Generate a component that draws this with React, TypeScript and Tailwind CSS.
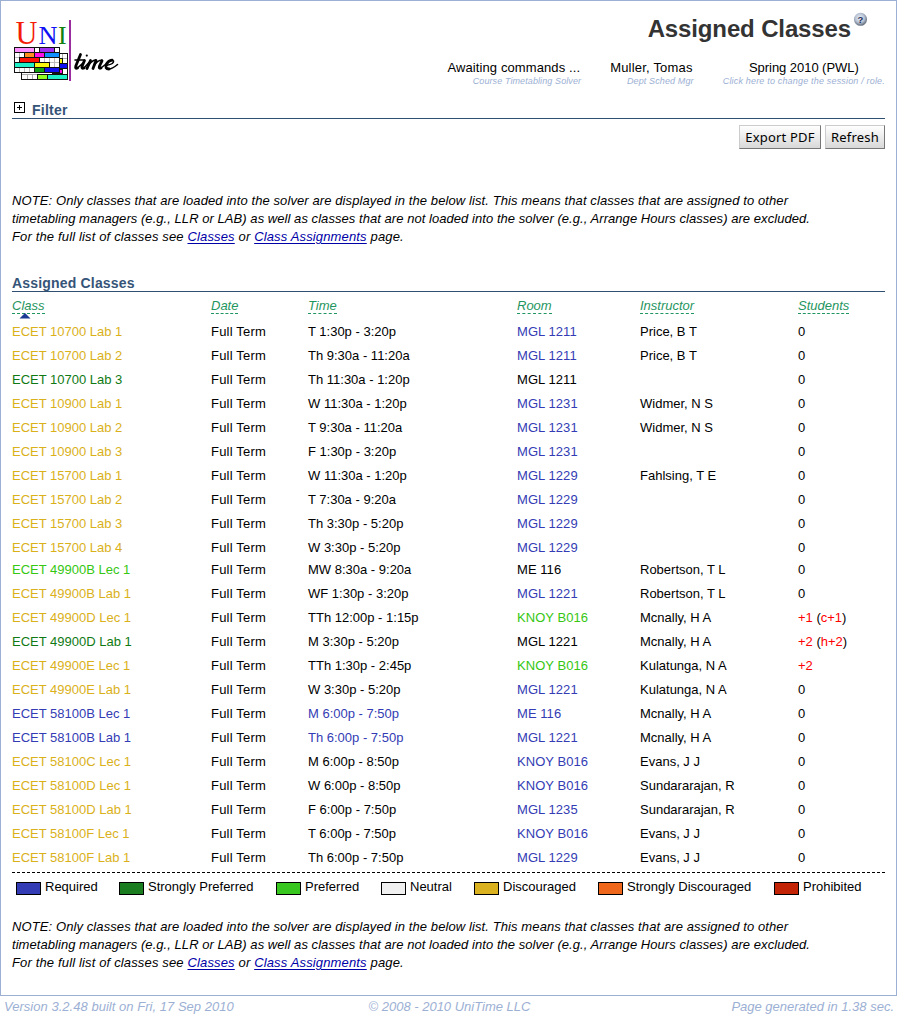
import React from "react";

const palette = {
  r: "text-[#333cb4]",
  sp: "text-[#0f7a14]",
  p: "text-[#35c711]",
  n: "text-black",
  d: "text-[#dab11a]",
};
type Pref = keyof typeof palette;
type Row = [string, Pref, string, Pref, string, Pref, string, string?, string?];

const rows: Row[] = [
  ["ECET 10700 Lab 1", "d", "T 1:30p - 3:20p", "n", "MGL 1211", "r", "Price, B T"],
  ["ECET 10700 Lab 2", "d", "Th 9:30a - 11:20a", "n", "MGL 1211", "r", "Price, B T"],
  ["ECET 10700 Lab 3", "sp", "Th 11:30a - 1:20p", "n", "MGL 1211", "n", ""],
  ["ECET 10900 Lab 1", "d", "W 11:30a - 1:20p", "n", "MGL 1231", "r", "Widmer, N S"],
  ["ECET 10900 Lab 2", "d", "T 9:30a - 11:20a", "n", "MGL 1231", "r", "Widmer, N S"],
  ["ECET 10900 Lab 3", "d", "F 1:30p - 3:20p", "n", "MGL 1231", "r", ""],
  ["ECET 15700 Lab 1", "d", "W 11:30a - 1:20p", "n", "MGL 1229", "r", "Fahlsing, T E"],
  ["ECET 15700 Lab 2", "d", "T 7:30a - 9:20a", "n", "MGL 1229", "r", ""],
  ["ECET 15700 Lab 3", "d", "Th 3:30p - 5:20p", "n", "MGL 1229", "r", ""],
  ["ECET 15700 Lab 4", "d", "W 3:30p - 5:20p", "n", "MGL 1229", "r", ""],
  ["ECET 49900B Lec 1", "p", "MW 8:30a - 9:20a", "n", "ME 116", "n", "Robertson, T L"],
  ["ECET 49900B Lab 1", "d", "WF 1:30p - 3:20p", "n", "MGL 1221", "r", "Robertson, T L"],
  ["ECET 49900D Lec 1", "d", "TTh 12:00p - 1:15p", "n", "KNOY B016", "p", "Mcnally, H A", "+1", "c+1"],
  ["ECET 49900D Lab 1", "sp", "M 3:30p - 5:20p", "n", "MGL 1221", "n", "Mcnally, H A", "+2", "h+2"],
  ["ECET 49900E Lec 1", "d", "TTh 1:30p - 2:45p", "n", "KNOY B016", "p", "Kulatunga, N A", "+2"],
  ["ECET 49900E Lab 1", "d", "W 3:30p - 5:20p", "n", "MGL 1221", "r", "Kulatunga, N A"],
  ["ECET 58100B Lec 1", "r", "M 6:00p - 7:50p", "r", "ME 116", "r", "Mcnally, H A"],
  ["ECET 58100B Lab 1", "r", "Th 6:00p - 7:50p", "r", "MGL 1221", "r", "Mcnally, H A"],
  ["ECET 58100C Lec 1", "d", "M 6:00p - 8:50p", "n", "KNOY B016", "r", "Evans, J J"],
  ["ECET 58100D Lec 1", "d", "W 6:00p - 8:50p", "n", "KNOY B016", "r", "Sundararajan, R"],
  ["ECET 58100D Lab 1", "d", "F 6:00p - 7:50p", "n", "MGL 1235", "r", "Sundararajan, R"],
  ["ECET 58100F Lec 1", "d", "T 6:00p - 7:50p", "n", "KNOY B016", "r", "Evans, J J"],
  ["ECET 58100F Lab 1", "d", "Th 6:00p - 7:50p", "n", "MGL 1229", "r", "Evans, J J"],
];

const columns = "grid grid-cols-[199px_97px_209px_123px_158px_1fr]";

const legend = [
  ["Required", "bg-[#333cb4]", "w-[103px]"],
  ["Strongly Preferred", "bg-[#1a7d20]", "w-[157px]"],
  ["Preferred", "bg-[#38c71f]", "w-[105px]"],
  ["Neutral", "bg-[#f0f0f0]", "w-[93px]"],
  ["Discouraged", "bg-[#dab11e]", "w-[124px]"],
  ["Strongly Discouraged", "bg-[#ef671b]", "w-[176px]"],
  ["Prohibited", "bg-[#c42406]", "w-[100px]"],
];

function Note() {
  const link = "text-[#0000a8] underline underline-offset-[2px]";
  return (
    <div className="whitespace-nowrap italic leading-[18px]">
      <p className="tracking-[0.097px]">
        NOTE: Only classes that are loaded into the solver are displayed in the below list. This means that classes that are assigned to other
      </p>
      <p className="tracking-[0.052px]">
        timetabling managers (e.g., LLR or LAB) as well as classes that are not loaded into the solver (e.g., Arrange Hours classes) are excluded.
      </p>
      <p className="tracking-[0.15px]">
        For the full list of classes see <a className={link}>Classes</a> or <a className={link}>Class Assignments</a> page.
      </p>
    </div>
  );
}

const bricks: [number, number, number, string][] = [
  [14, 47, 20, "#ff90ff"], [39, 47, 15, "#a030f0"],
  [24, 52, 10, "#ff9020"], [34, 52, 10, "#ff10e8"], [44, 52, 15, "#1090ff"],
  [19, 57, 20, "#ff1000"],
  [14, 62, 20, "#20f0c8"], [34, 62, 15, "#f8f810"],
  [34, 67, 10, "#10a010"], [44, 67, 15, "#1010f0"],
];

function Logo() {
  return (
    <svg width="108" height="64" viewBox="13 19 108 64" className="block overflow-visible">
      <g fontFamily="Liberation Serif, serif">
        <text x="15.500" y="43.500" fontSize="34" fill="#f41c08" textLength="22" lengthAdjust="spacingAndGlyphs">U</text>
        <text x="38.500" y="43.500" fontSize="26" fill="#1010f4" textLength="19" lengthAdjust="spacingAndGlyphs">N</text>
        <text x="58" y="43.500" fontSize="26" fill="#108010">I</text>
      </g>
      <g shapeRendering="crispEdges" strokeWidth="1">
        <path d="M21.5 53.5H67.5V79.5H21.5Z" fill="#fff" stroke="#111" />
        <path d="M22 74.5H67M60 58.5H67M60 63.5H67M60 68.5H67M27.5 74V79M32.5 74V79M62.5 54V74" stroke="#aaa" />
        <g stroke="#111">
          <path d="M37.5 74.5H47.5V79.5H37.5Z" fill="#90ff20" />
          <path d="M47.5 74.5H67.5V79.5H47.5Z" fill="#20f0c8" />
          <path d="M59.5 63.5H67.5V68.5H59.5Z" fill="#1010f0" />
          <path d="M52.5 69.5H62.5V73.5H52.5Z" fill="#ff10e8" />
          <path d="M59.5 58.5H62.5V63.5H59.5Z" fill="#f8f810" />
          <path d="M14.5 47.5H59.5V72.5H14.5Z" fill="#fff" />
        </g>
        <path d="M19.5 48V72M24.5 48V72M29.5 48V72M34.5 48V72M39.5 48V72M44.5 48V72M49.5 48V72M54.5 48V72M14 52.5H60M14 57.5H60M14 62.5H60M14 67.5H60" stroke="#bbb" />
        <path d="M14.5 47.5H59.5V72.5H14.5Z" fill="none" stroke="#111" />
        {bricks.map(([x, y, w, fill]) => (
          <rect key={`${x}-${y}`} x={x + 0.5} y={y + 0.5} width={w} height="5" fill={fill} stroke="#111" />
        ))}
      </g>
      <path d="M70 20V81" stroke="#9a2ca0" strokeWidth="2" />
      <g fill="none" stroke="#000" strokeLinecap="round" strokeLinejoin="round">
        <path strokeWidth="2.8" d="M80.500 54.500L75.800 66Q75 69 77.500 68M84.500 60.500L82 66.500Q81.500 69 84 68M90.500 60.500L87 68.500M96 60.500L93 68.500M102 60.800L99.500 66Q98.500 69 101 68M112 60.200Q108.500 60.500 106.500 64Q104.500 69 109 69" />
        <path strokeWidth="1.6" d="M75 60H83.500M77.500 68L83 63M84 68L89 62.500M88.500 65Q92.500 60 96 60M94.500 65Q98 60 102 60.300M101 68L106 64M107 65.300Q114 64 113.500 61Q113 60 111 60.300M109 69Q112 69 117.500 64.500" />
        <path strokeWidth="2.2" d="M86.800 55.500V55.600" />
      </g>
    </svg>
  );
}

function HelpIcon() {
  return (
    <svg width="14" height="14" viewBox="0 0 14 14" className="block overflow-visible">
      <defs>
        <radialGradient id="ball" cx="0.45" cy="0.4" r="0.65">
          <stop offset="0" stopColor="#f0f4fa" />
          <stop offset="0.55" stopColor="#b4c0d2" />
          <stop offset="1" stopColor="#4a5464" />
        </radialGradient>
      </defs>
      <circle cx="7.500" cy="7.300" r="6.500" fill="url(#ball)" />
      <text x="7.300" y="10.500" fontSize="9.500" fontWeight="bold" textAnchor="middle" fill="#1c2c58" fontFamily="Liberation Sans, sans-serif">?</text>
    </svg>
  );
}

function Info({ title, sub, className, titleClass }: { title: string; sub: string; className: string; titleClass: string }) {
  return (
    <div className={`whitespace-nowrap ${className}`}>
      <div className={`leading-[15px] ${titleClass}`}>{title}</div>
      <div className="text-[9px] italic leading-[13px] text-[#9cb0d4]">{sub}</div>
    </div>
  );
}

export default function App() {
  const button =
    "h-[24px] border border-t-[#ccc] border-l-[#ccc] border-r-[#777] border-b-[#777] bg-linear-to-b from-white to-[#d8d8d8] text-center font-['Noto_Sans','Open_Sans',sans-serif] text-[13px] leading-[22px] tracking-[0.2px] whitespace-nowrap";
  return (
    <div className="h-[1020px] w-[897px] bg-white font-['Liberation_Sans',Arial,sans-serif] text-[13px] text-black">
      <div className="h-[996px] border border-[#9cb0d4] px-[11px]">
        <header className="flex h-[99px] justify-between">
          <div className="pt-[18px] pl-px">
            <Logo />
          </div>
          <div className="pt-[11px]">
            <div className="flex justify-end pr-[18px]">
              <h1 className="pt-[2px] text-[24px] leading-[30px] font-bold tracking-[-0.13px] whitespace-nowrap text-[#333]">Assigned Classes</h1>
              <div className="pl-[2px]"><HelpIcon /></div>
            </div>
            <div className="flex justify-end pt-[16px]">
              <Info title="Awaiting commands ..." sub="Course Timetabling Solver" className="mr-[29px] text-right tracking-[0.1px]" titleClass="pr-px" />
              <Info title="Muller, Tomas" sub="Dept Sched Mgr" className="mr-[29px] text-right tracking-[0.12px]" titleClass="pr-px tracking-[0.2px]" />
              <Info title="Spring 2010 (PWL)" sub="Click here to change the session / role." className="text-center tracking-[0.18px]" titleClass="tracking-[-0.05px]" />
            </div>
          </div>
        </header>

        <div className="flex h-[19px] border-b border-[#2f4f73] pl-[2px]">
          <svg width="11" height="11" viewBox="0 0 11 11" className="mt-[2px]" shapeRendering="crispEdges">
            <path d="M.5 .5H10.500V10.500H.5Z" fill="#fff" stroke="#000" />
            <path d="M3 5.500H8M5.500 3V8" stroke="#000" />
          </svg>
          <h2 className="pt-[2px] pl-[7px] text-[14px] leading-[17px] font-bold tracking-[0.25px] text-[#355478]">Filter</h2>
        </div>
        <div className="flex h-[73px] justify-end gap-[4px] pt-[6px]">
          <button className={`${button} w-[82px]`}>Export PDF</button>
          <button className={`${button} w-[60px]`}>Refresh</button>
        </div>

        <Note />

        <h2 className="mt-[29px] h-[17px] border-b border-[#2f4f73] text-[14px] leading-[17px] font-bold tracking-[0.18px] text-[#355478]">Assigned Classes</h2>
        <div className={`${columns} h-[28px] pt-[5px] text-[#1f9560] italic`}>
          {["Class", "Date", "Time", "Room", "Instructor", "Students"].map((name) => (
            <div key={name} className="h-[17px] leading-[17px]">
              <span className="relative block h-[17px] w-fit border-b border-dashed border-[#1f9560]">
                {name}
                {name === "Class" && (
                  <svg width="12" height="6" viewBox="0 0 12 6" className="absolute top-[16px] left-[7px]">
                    <path d="M6 0L11.500 5.500H.5Z" fill="#1b3c94" />
                  </svg>
                )}
              </span>
            </div>
          ))}
        </div>

        <div className="h-[553px] border-b border-dashed border-black">
          {rows.map(([name, namePref, time, timePref, room, roomPref, instructor, total, detail], i) => (
            <div key={name} className={`${columns} whitespace-nowrap leading-[24px] ${i === 9 ? "h-[22px]" : "h-[24px]"}`}>
              <div className={palette[namePref]}>{name}</div>
              <div className="tracking-[0.2px]">Full Term</div>
              <div className={palette[timePref]}>{time}</div>
              <div className={`tracking-[0.06px] ${palette[roomPref]}`}>{room}</div>
              <div>{instructor}</div>
              <div>
                {total ? <span className="text-[#ff0000]">{total}</span> : "0"}
                {detail && <> (<span className="text-[#ff0000]">{detail}</span>)</>}
              </div>
            </div>
          ))}
        </div>

        <div className="flex h-[45px] pt-[6px] pl-[4px]">
          {legend.map(([label, color, width]) => (
            <div key={label} className={`flex shrink-0 whitespace-nowrap leading-[16px] ${width}`}>
              <span className={`mt-[3px] mr-[4px] h-[13px] w-[25px] shrink-0 border border-black ${color}`} />
              {label}
            </div>
          ))}
        </div>
        <Note />
      </div>
      <footer className="grid grid-cols-3 px-[4px] pt-[3px] leading-[16px] text-[#9cb0d4] italic">
        <div className="tracking-[0.03px]">Version 3.2.48 built on Fri, 17 Sep 2010</div>
        <div className="pl-[2px] text-center">© 2008 - 2010 UniTime LLC</div>
        <div className="-mr-px text-right">Page generated in 1.38 sec.</div>
      </footer>
    </div>
  );
}
